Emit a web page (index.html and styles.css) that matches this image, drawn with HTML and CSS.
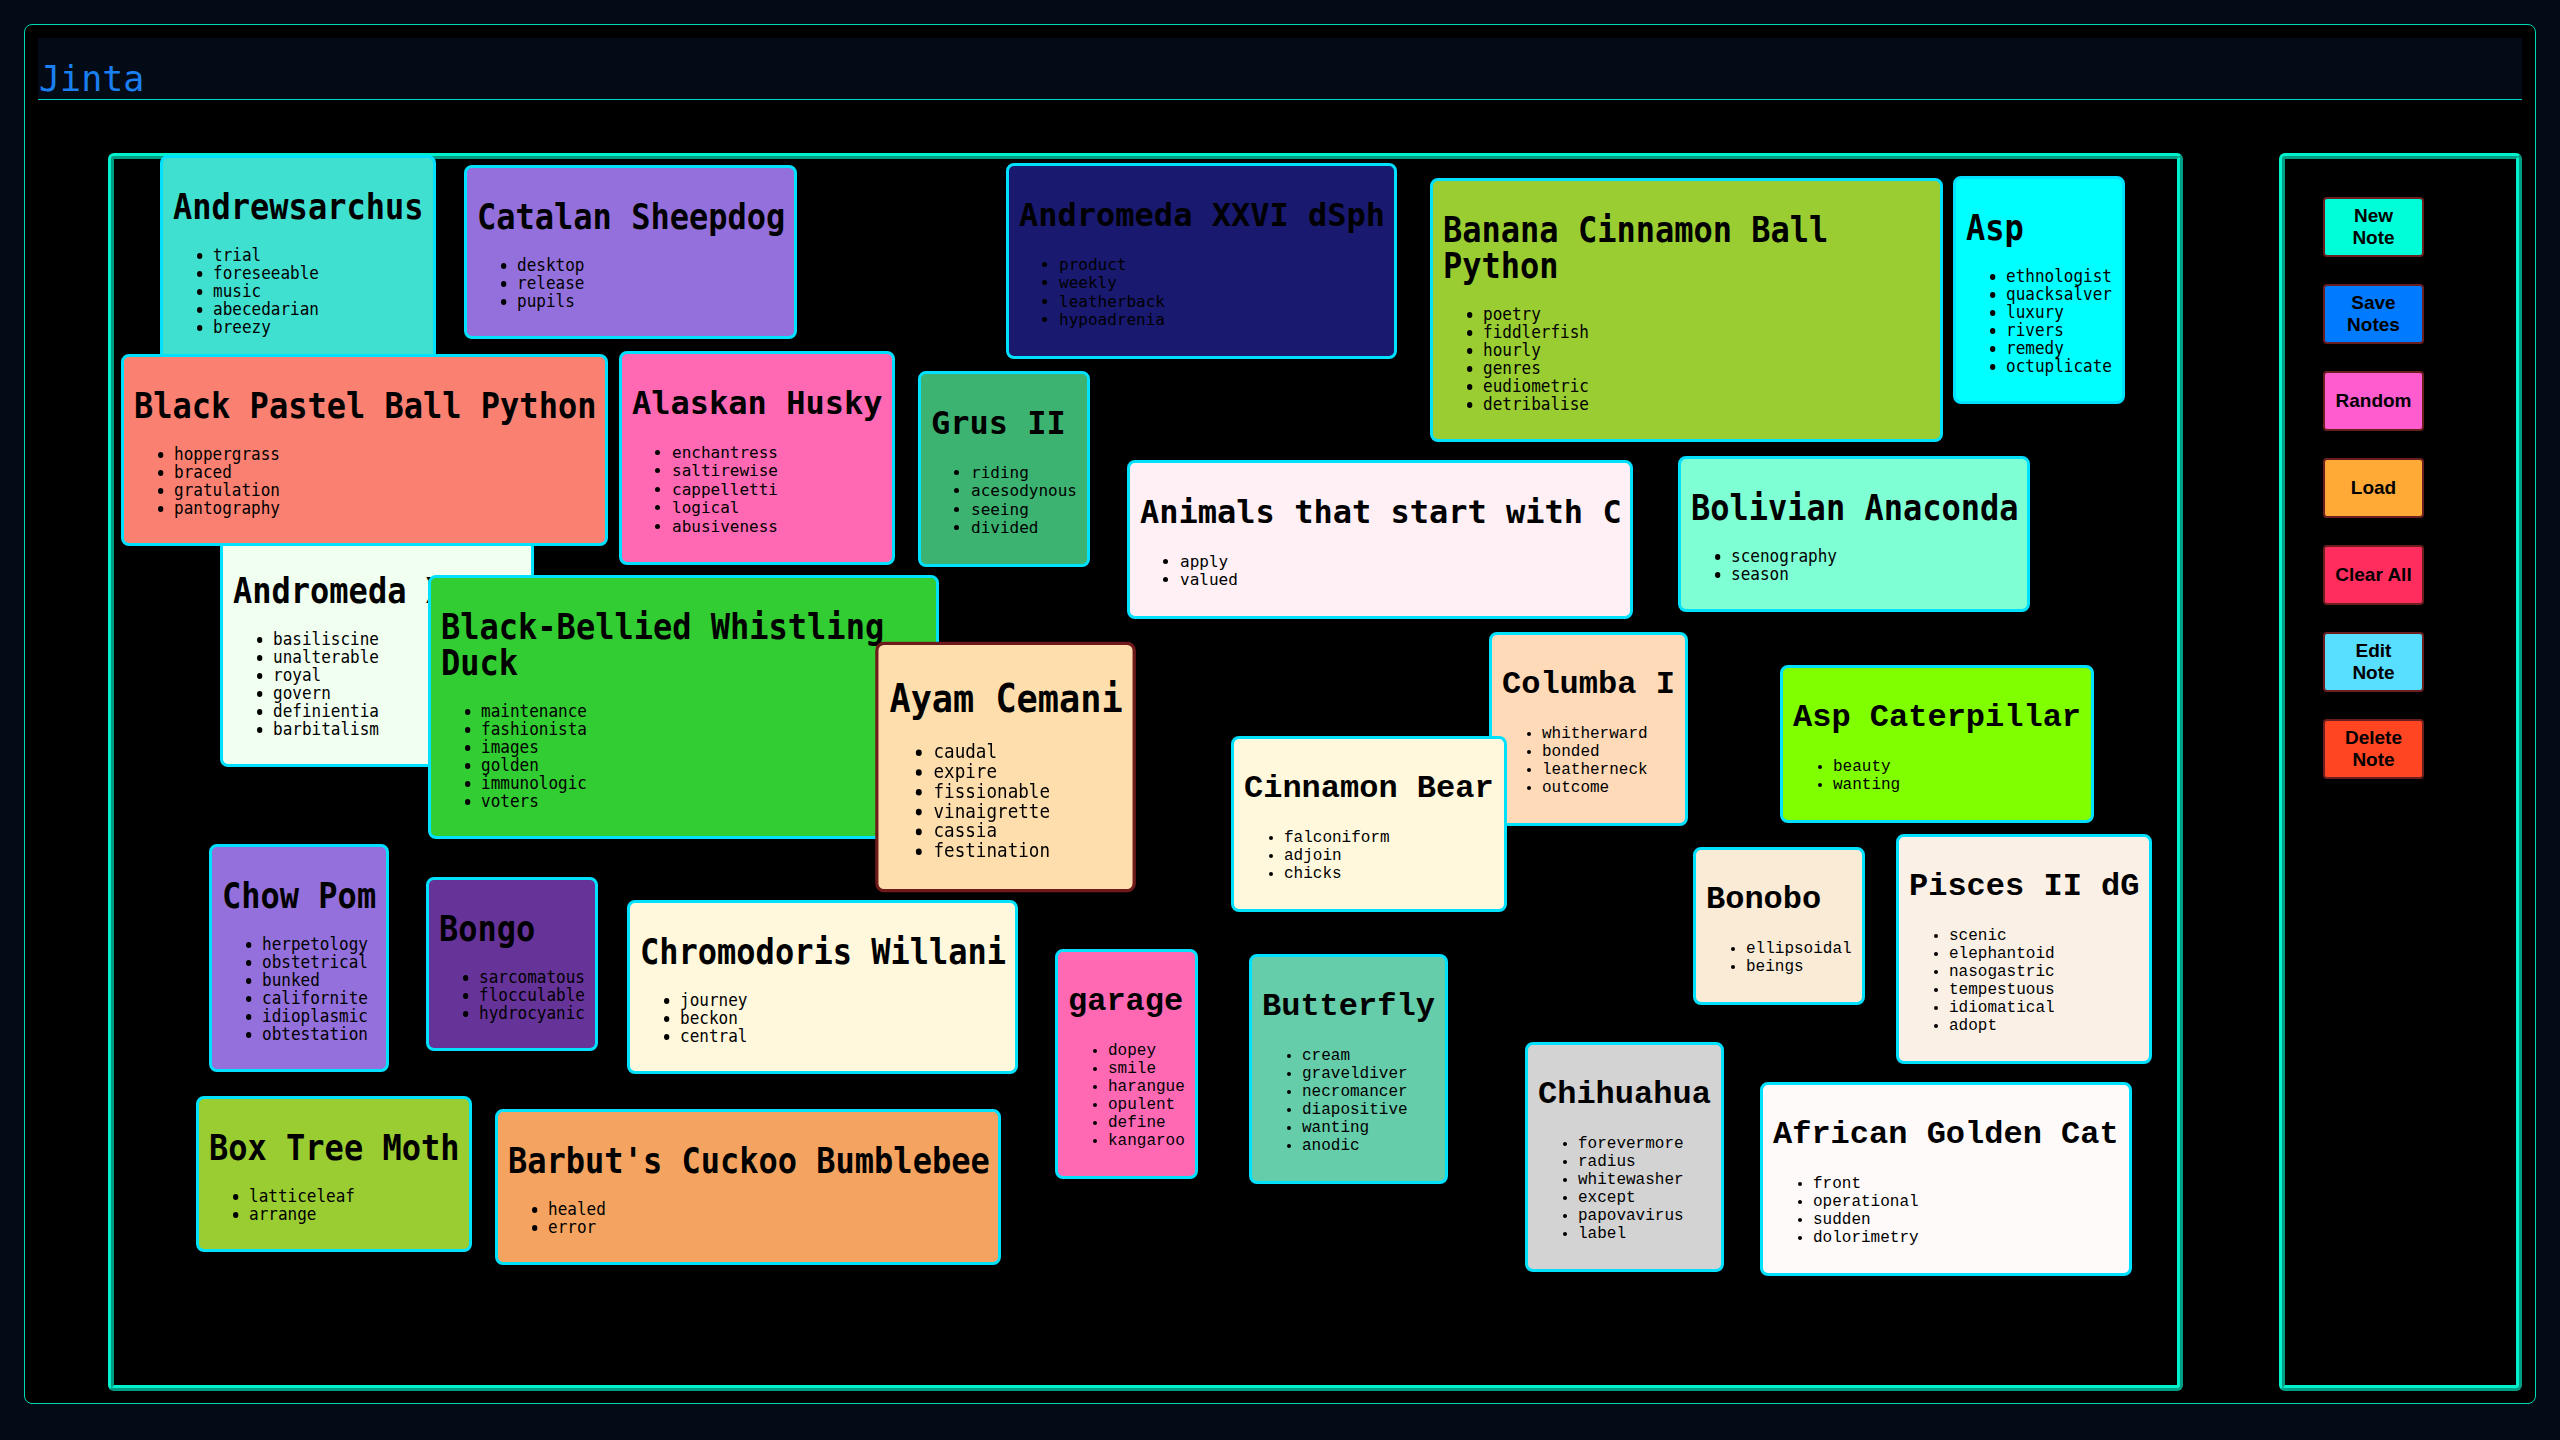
FILE: index.html
```html
<!DOCTYPE html>
<html lang="en">

<head>
    <meta charset="UTF-8">
    <meta name="viewport" content="width=device-width, initial-scale=1.0">
    <title>Jinta</title>
    <link rel="stylesheet" href="styles.css">
</head>

<body>

    <div class="app">
        <header class="topbar">
            <h1 class="brand">Jinta</h1>
        </header>

        <main class="workspace">
            <section class="board" id="board">
                <div class="note mono-n" style="left:46px;top:-4px;width:276px;background:#40e0d0">
                    <h1>Andrewsarchus</h1>
                    <ul><li>trial</li><li>foreseeable</li><li>music</li><li>abecedarian</li><li>breezy</li></ul>
                </div>
                <div class="note mono-n" style="left:350px;top:6px;width:333px;background:#9370db">
                    <h1>Catalan Sheepdog</h1>
                    <ul><li>desktop</li><li>release</li><li>pupils</li></ul>
                </div>
                <div class="note mono-d" style="left:892px;top:4px;width:391px;background:#191970">
                    <h1>Andromeda XXVI dSph</h1>
                    <ul><li>product</li><li>weekly</li><li>leatherback</li><li>hypoadrenia</li></ul>
                </div>
                <div class="note mono-n wrap" style="left:1316px;top:19px;width:513px;background:#9acd32">
                    <h1>Banana Cinnamon Ball Python</h1>
                    <ul><li>poetry</li><li>fiddlerfish</li><li>hourly</li><li>genres</li><li>eudiometric</li><li>detribalise</li></ul>
                </div>
                <div class="note mono-n" style="left:1839px;top:17px;width:172px;background:#00ffff">
                    <h1>Asp</h1>
                    <ul><li>ethnologist</li><li>quacksalver</li><li>luxury</li><li>rivers</li><li>remedy</li><li>octuplicate</li></ul>
                </div>
                <div class="note mono-n" style="left:106px;top:380px;width:314px;background:#f0fff0">
                    <h1>Andromeda XVIII</h1>
                    <ul><li>basiliscine</li><li>unalterable</li><li>royal</li><li>govern</li><li>definientia</li><li>barbitalism</li></ul>
                </div>
                <div class="note mono-n" style="left:7px;top:195px;width:487px;background:#fa8072">
                    <h1>Black Pastel Ball Python</h1>
                    <ul><li>hoppergrass</li><li>braced</li><li>gratulation</li><li>pantography</li></ul>
                </div>
                <div class="note mono-d" style="left:505px;top:192px;width:276px;background:#ff69b4">
                    <h1>Alaskan Husky</h1>
                    <ul><li>enchantress</li><li>saltirewise</li><li>cappelletti</li><li>logical</li><li>abusiveness</li></ul>
                </div>
                <div class="note mono-d" style="left:804px;top:212px;width:172px;background:#3cb371">
                    <h1>Grus II</h1>
                    <ul><li>riding</li><li>acesodynous</li><li>seeing</li><li>divided</li></ul>
                </div>
                <div class="note mono-d" style="left:1013px;top:301px;width:506px;background:#fff0f5">
                    <h1>Animals that start with C</h1>
                    <ul><li>apply</li><li>valued</li></ul>
                </div>
                <div class="note mono-n" style="left:1564px;top:297px;width:352px;background:#7fffd4">
                    <h1>Bolivian Anaconda</h1>
                    <ul><li>scenography</li><li>season</li></ul>
                </div>
                <div class="note mono-n wrap" style="left:314px;top:416px;width:511px;background:#32cd32">
                    <h1>Black-Bellied Whistling Duck</h1>
                    <ul><li>maintenance</li><li>fashionista</li><li>images</li><li>golden</li><li>immunologic</li><li>voters</li></ul>
                </div>
                <div class="note mono-l" style="left:1375px;top:473px;width:199px;background:#ffdab9">
                    <h1>Columba I</h1>
                    <ul><li>whitherward</li><li>bonded</li><li>leatherneck</li><li>outcome</li></ul>
                </div>
                <div class="note mono-l" style="left:1666px;top:506px;width:314px;background:#7fff00">
                    <h1>Asp Caterpillar</h1>
                    <ul><li>beauty</li><li>wanting</li></ul>
                </div>
                <div class="note mono-l" style="left:1117px;top:577px;width:276px;background:#fff8dc">
                    <h1>Cinnamon Bear</h1>
                    <ul><li>falconiform</li><li>adjoin</li><li>chicks</li></ul>
                </div>
                <div class="note mono-n" style="left:95px;top:685px;width:180px;background:#9370db">
                    <h1>Chow Pom</h1>
                    <ul><li>herpetology</li><li>obstetrical</li><li>bunked</li><li>californite</li><li>idioplasmic</li><li>obtestation</li></ul>
                </div>
                <div class="note mono-n" style="left:312px;top:718px;width:172px;background:#663399">
                    <h1>Bongo</h1>
                    <ul><li>sarcomatous</li><li>flocculable</li><li>hydrocyanic</li></ul>
                </div>
                <div class="note mono-n" style="left:513px;top:741px;width:391px;background:#fff8dc">
                    <h1>Chromodoris Willani</h1>
                    <ul><li>journey</li><li>beckon</li><li>central</li></ul>
                </div>
                <div class="note mono-l" style="left:1579px;top:688px;width:172px;background:#faebd7">
                    <h1>Bonobo</h1>
                    <ul><li>ellipsoidal</li><li>beings</li></ul>
                </div>
                <div class="note mono-l" style="left:1782px;top:675px;width:256px;background:#faf0e6">
                    <h1>Pisces II dG</h1>
                    <ul><li>scenic</li><li>elephantoid</li><li>nasogastric</li><li>tempestuous</li><li>idiomatical</li><li>adopt</li></ul>
                </div>
                <div class="note mono-l" style="left:941px;top:790px;width:143px;background:#ff69b4">
                    <h1>garage</h1>
                    <ul><li>dopey</li><li>smile</li><li>harangue</li><li>opulent</li><li>define</li><li>kangaroo</li></ul>
                </div>
                <div class="note mono-l" style="left:1135px;top:795px;width:199px;background:#66cdaa">
                    <h1>Butterfly</h1>
                    <ul><li>cream</li><li>graveldiver</li><li>necromancer</li><li>diapositive</li><li>wanting</li><li>anodic</li></ul>
                </div>
                <div class="note mono-l" style="left:1411px;top:883px;width:199px;background:#d3d3d3">
                    <h1>Chihuahua</h1>
                    <ul><li>forevermore</li><li>radius</li><li>whitewasher</li><li>except</li><li>papovavirus</li><li>label</li></ul>
                </div>
                <div class="note mono-l" style="left:1646px;top:923px;width:372px;background:#fffafa">
                    <h1>African Golden Cat</h1>
                    <ul><li>front</li><li>operational</li><li>sudden</li><li>dolorimetry</li></ul>
                </div>
                <div class="note mono-n" style="left:82px;top:937px;width:276px;background:#9acd32">
                    <h1>Box Tree Moth</h1>
                    <ul><li>latticeleaf</li><li>arrange</li></ul>
                </div>
                <div class="note mono-n" style="left:381px;top:950px;width:506px;background:#f4a460">
                    <h1>Barbut's Cuckoo Bumblebee</h1>
                    <ul><li>healed</li><li>error</li></ul>
                </div>
                <div class="note mono-n selected" style="left:773px;top:494px;width:237px;background:#ffdead">
                    <h1>Ayam Cemani</h1>
                    <ul><li>caudal</li><li>expire</li><li>fissionable</li><li>vinaigrette</li><li>cassia</li><li>festination</li></ul>
                </div>
            </section>

            <aside class="tools">
                <button class="btn btn-new">New Note</button>
                <button class="btn btn-save">Save Notes</button>
                <button class="btn btn-random">Random</button>
                <button class="btn btn-load">Load</button>
                <button class="btn btn-clear">Clear All</button>
                <button class="btn btn-edit">Edit Note</button>
                <button class="btn btn-delete">Delete Note</button>
            </aside>
        </main>
    </div>

</body>

</html>
```

FILE: styles.css
```css
body {
    margin: 0;
    background-color: #030b16;
    font-family: "DejaVu Sans Mono", monospace;
}

.app {
    margin: 24px;
    height: 1380px;
    box-sizing: border-box;
    padding: 13px;
    background-color: #000;
    border: 1px solid #00d8b8;
    border-radius: 8px;
}

.topbar {
    height: 62px;
    box-sizing: border-box;
    display: flex;
    align-items: flex-end;
    background-color: #030b16;
    border-bottom: 1px solid #00d8c4;
}

.brand {
    margin: 0 0 0 1px;
    font-size: 35px;
    font-weight: normal;
    color: #1a7ff0;
}

.workspace {
    display: flex;
    gap: 96px;
    margin-top: 53px;
    padding-left: 70px;
}

.board {
    position: relative;
    width: 2075px;
    height: 1238px;
    box-sizing: border-box;
    border: 6px ridge #00f2cc;
    border-radius: 6px;
    background-color: #000;
}

.tools {
    width: 243px;
    height: 1238px;
    box-sizing: border-box;
    display: flex;
    flex-direction: column;
    align-items: flex-start;
    gap: 27px;
    padding: 38px 0 0 38px;
    border: 6px ridge #00f2cc;
    border-radius: 6px;
}

/* notes */

.note {
    position: absolute;
    box-sizing: border-box;
    padding: 10px;
    border: 3px solid #00e0ff;
    border-radius: 8px;
    color: #000;
}

.note h1 {
    margin: 0.67em 0;
    font-size: 32px;
    white-space: nowrap;
}

.note.wrap h1 {
    white-space: normal;
}

.note ul {
    margin: 16px 0;
    padding-left: 40px;
    font-size: 16px;
    white-space: nowrap;
}

.mono-l {
    font-family: "Liberation Mono", monospace;
}

.mono-d {
    font-family: "DejaVu Sans Mono", monospace;
}

.mono-d h1 {
    line-height: 37px;
}

.mono-d ul {
    line-height: 18.5px;
}

/* narrow face: taller glyphs squeezed back to the same advance */
.mono-n {
    font-family: "DejaVu Sans Mono", monospace;
}

.mono-n h1,
.mono-n ul {
    width: 112.5%;
    transform: scaleX(0.889);
    transform-origin: 0 0;
}

.mono-n h1 {
    margin: 21px 0;
    font-size: 36px;
    line-height: 36px;
}

.mono-n ul {
    font-size: 18px;
    line-height: 18px;
    padding-left: 45px;
}

.note.selected {
    border-color: #6e1a1a;
    transform: scale(1.1);
}

/* tool buttons */

.btn {
    width: 101px;
    height: 60px;
    padding: 0 8px;
    border: 2px solid #6b1e1e;
    border-radius: 4px;
    font-family: "Liberation Sans", Arial, sans-serif;
    font-size: 19px;
    font-weight: bold;
    line-height: 22px;
    color: #000;
    cursor: pointer;
}

.btn-new {
    background-color: #00ffd8;
}

.btn-save {
    background-color: #007bff;
}

.btn-random {
    background-color: #ff5ccf;
}

.btn-load {
    background-color: #ffaa36;
}

.btn-clear {
    background-color: #ff2d5e;
}

.btn-edit {
    background-color: #58deff;
}

.btn-delete {
    background-color: #ff4522;
}
```
